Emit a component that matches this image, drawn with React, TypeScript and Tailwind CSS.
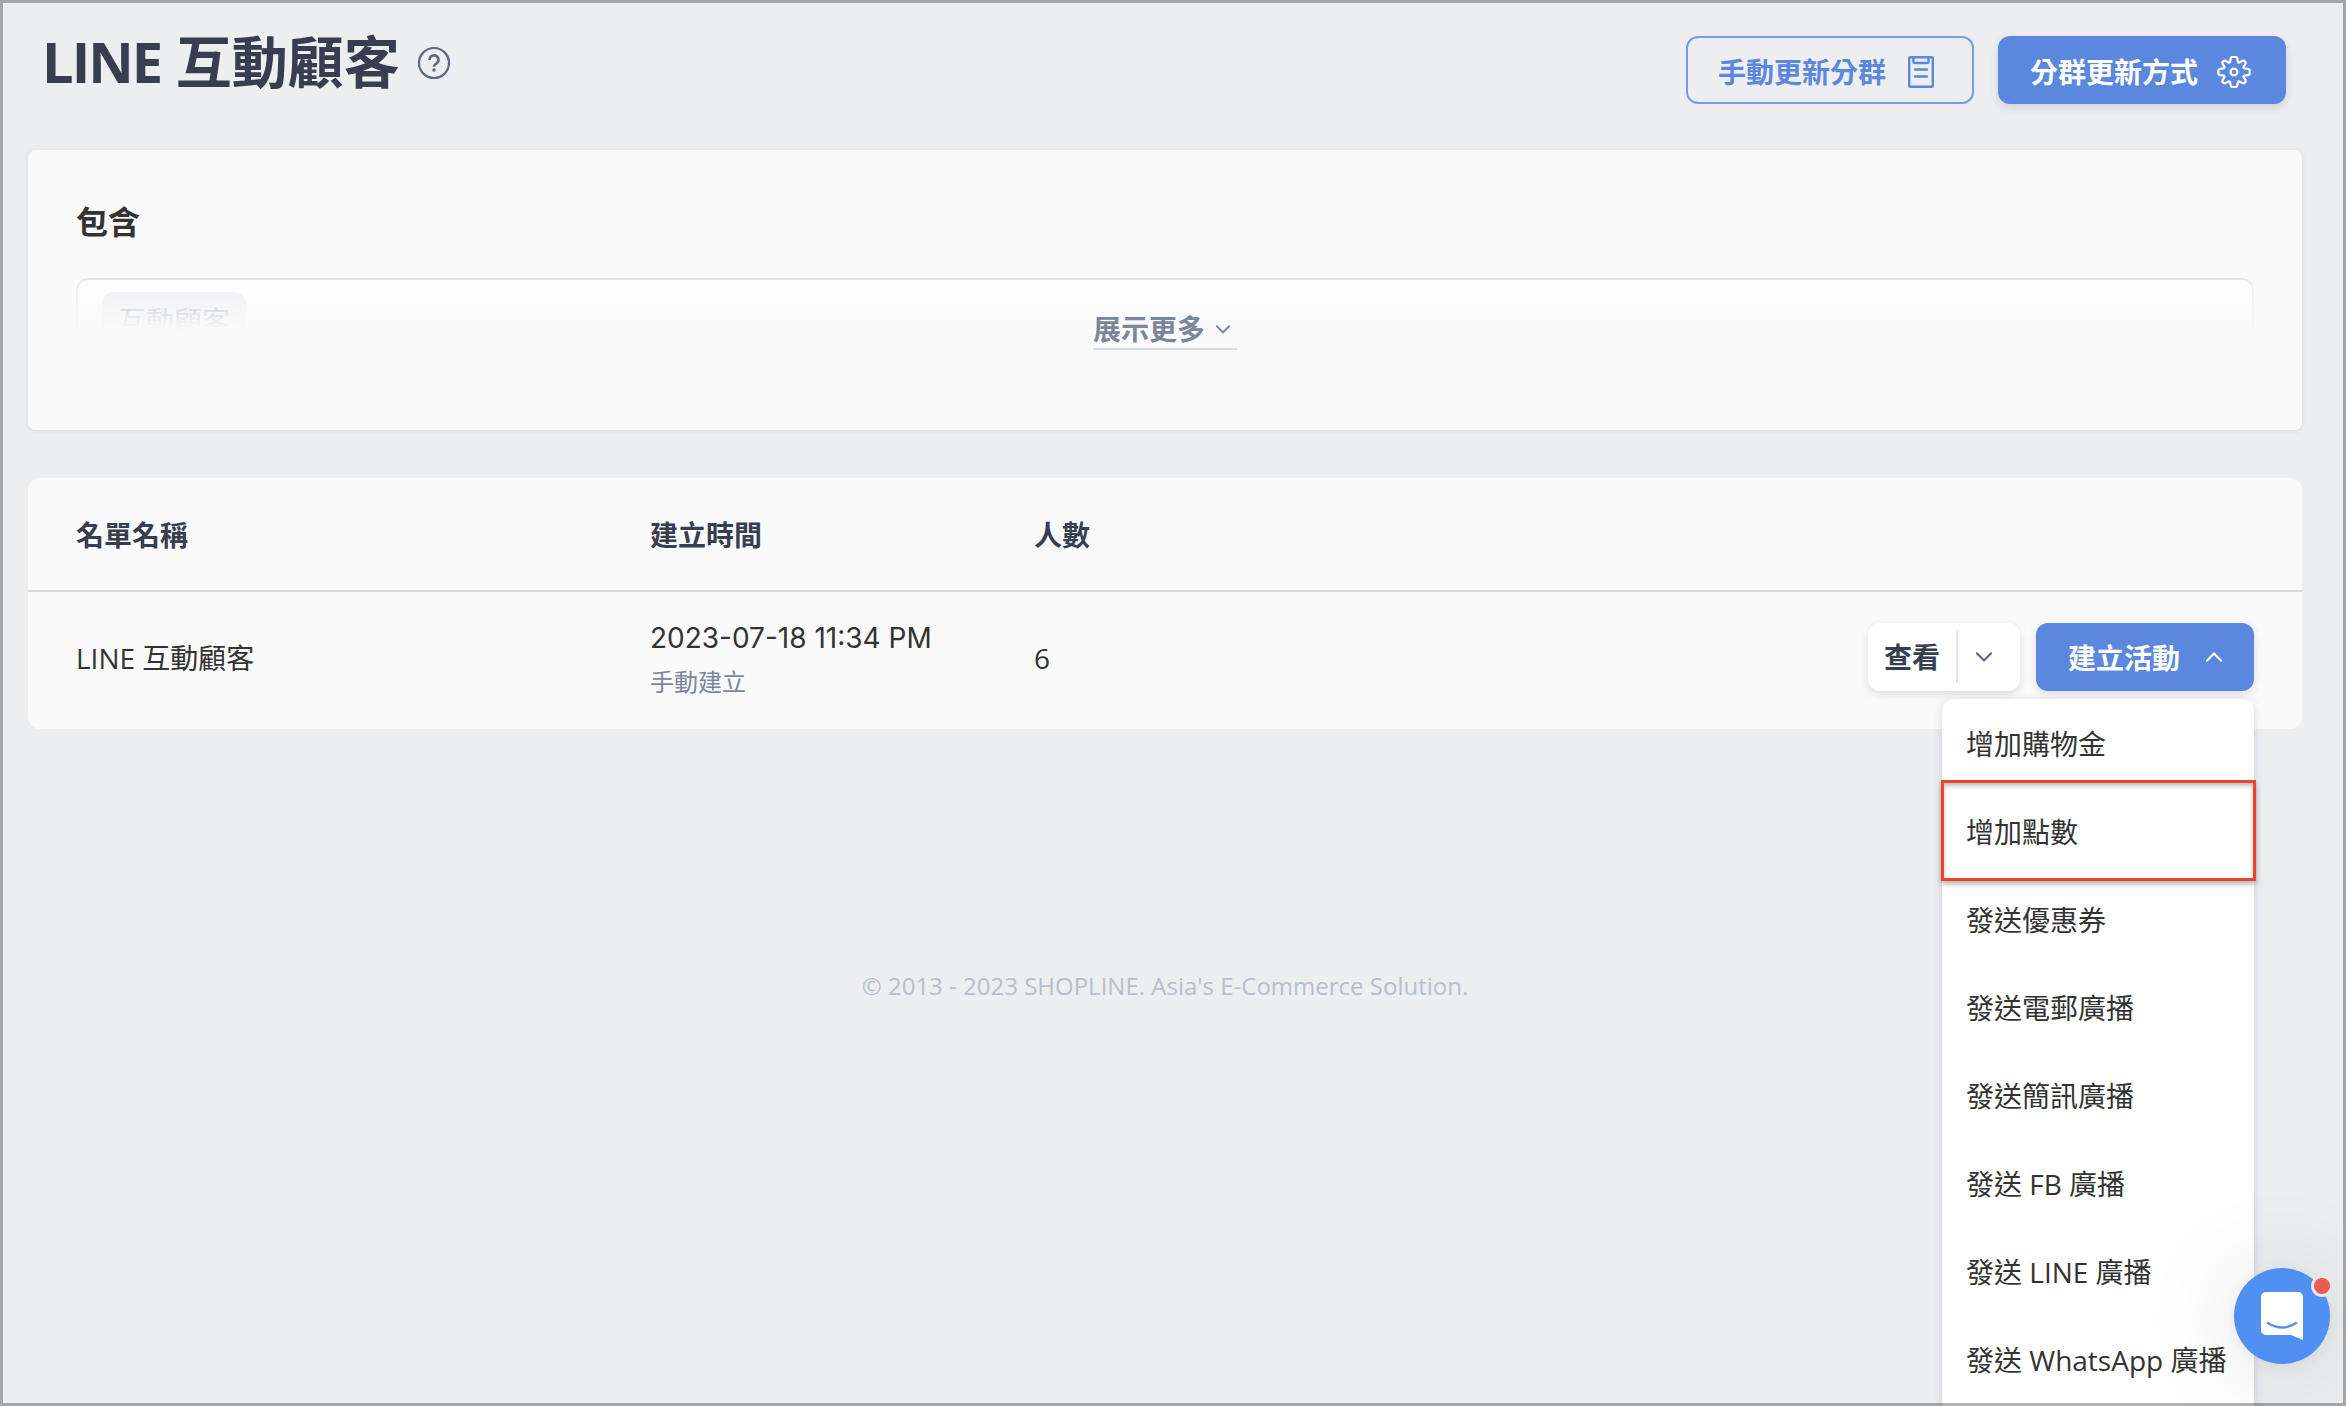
import { useState } from 'react';
import clsx from 'clsx';

const columns = ['名單名稱', '建立時間', '人數'];

const campaignActions = [
  '增加購物金',
  '增加點數',
  '發送優惠券',
  '發送電郵廣播',
  '發送簡訊廣播',
  '發送 FB 廣播',
  '發送 LINE 廣播',
  '發送 WhatsApp 廣播',
];

function HelpIcon() {
  return (
    <svg width="34" height="34" viewBox="0 0 34 34" fill="none" stroke="#5b6785" strokeWidth="2.2" className="mt-1">
      <circle cx="17" cy="17" r="15" />
      <path d="M12.6 14a4.4 4.4 0 1 1 6.6 3.6c-1.5.9-2.2 1.6-2.2 3.2" strokeWidth="2.6" />
      <circle cx="17" cy="24" r="1.7" fill="#5b6785" stroke="none" />
    </svg>
  );
}

function ClipboardIcon() {
  return (
    <svg width="26" height="32" viewBox="0 0 26 32" fill="none" stroke="currentColor" strokeWidth="2.4" strokeLinejoin="round">
      <rect x="1.2" y="1.2" width="23.6" height="29.6" rx="1" />
      <path d="M5.4 1.2v4.4a1.4 1.4 0 0 0 1.4 1.4h12.4a1.4 1.4 0 0 0 1.4-1.4V1.2" />
      <path d="M7 13.5h12M7 20.5h12" strokeLinecap="round" />
    </svg>
  );
}

function GearIcon() {
  return (
    <svg width="34" height="32" viewBox="-17 -16 34 32" fill="none" stroke="currentColor" strokeWidth="2.3" strokeLinejoin="round">
      <path d="M-3.6-11.8C-3.6-16-0.9-15.2 0-15.2S3.6-16 3.6-11.8C3.6-9.2 4.8-8.6 6.6-10.1C9.6-12.4 10.4-11.1 11-10.5S12.6-9.2 10.4-6.4C8.9-4.6 9.6-3.4 12-3.4C16.2-3.4 15.7-0.9 15.7 0S16.2 3.4 12 3.4C9.6 3.4 8.9 4.6 10.4 6.4C12.6 9.2 11.6 9.9 11 10.5S9.6 12.4 6.6 10.1C4.8 8.6 3.6 9.2 3.6 11.8C3.6 16 0.9 15 0 15S-3.6 16-3.6 11.8C-3.6 9.2-4.8 8.6-6.6 10.1C-9.6 12.4-10.4 11.1-11 10.5S-12.6 9.2-10.4 6.4C-8.9 4.6-9.6 3.4-12 3.4C-16.2 3.4-15.7 0.9-15.7 0S-16.2-3.4-12-3.4C-9.6-3.4-8.9-4.6-10.4-6.4C-12.6-9.2-11.6-9.9-11-10.5S-9.6-12.4-6.6-10.1C-4.8-8.6-3.6-9.2-3.6-11.8Z" />
      <circle r="3.4" />
    </svg>
  );
}

function Chevron({ up = false, width = 16 }: { up?: boolean; width?: number }) {
  return (
    <svg width={width} height={width * 0.625} viewBox="0 0 16 10" fill="none" stroke="currentColor" strokeWidth="2.2" className={clsx(up && 'rotate-180')}>
      <path d="M1.1 1.4l6.9 7 6.9-7" strokeLinecap="round" />
    </svg>
  );
}

function ChatLauncher() {
  return (
    <button className="absolute left-[2234px] top-[1268px] w-24 h-24 rounded-full bg-[#5190f3] shadow-[0_2px_12px_rgba(0,0,0,0.06),0_4px_100px_rgba(0,0,0,0.14)]">
      <svg width="96" height="96" viewBox="0 0 96 96" fill="none" className="overflow-visible">
        <path d="M32 24h32a5 5 0 0 1 5 5v43l-12-5H32a5 5 0 0 1-5-5V29a5 5 0 0 1 5-5z" fill="#fff" />
        <path d="M34 55q14 9 28 0" stroke="#5190f3" strokeWidth="2.4" strokeLinecap="round" />
        <circle cx="88" cy="18" r="11" fill="#e6e7e9" />
        <circle cx="88" cy="18" r="8" fill="#ed5a50" />
      </svg>
    </button>
  );
}

export default function App() {
  const [menuOpen, setMenuOpen] = useState(true);

  return (
    <div className="relative w-[2346px] h-[1406px] overflow-hidden bg-[#eceef0] pl-7 pr-11 font-['Open_Sans','Noto_Sans_CJK_TC',sans-serif] text-[28px] leading-10 text-[#333]">
      <header className="flex h-[150px] items-start justify-between px-4 pt-9">
        <div className="-mt-[15px] -ml-0.5 flex items-center gap-[17px]">
          <h1 className="whitespace-nowrap text-[56px] font-bold leading-[80px] text-[#373e50]">
            <span className="tracking-[-2px]">LINE</span> 互動顧客
          </h1>
          <HelpIcon />
        </div>
        <div className="flex gap-6 font-bold">
          <button className="flex h-[68px] w-72 items-center gap-[22px] rounded-xl border-2 border-[#7a9ce6] pl-[30px] pt-1 text-[#5c87de]">
            <span>手動更新分群</span>
            <ClipboardIcon />
          </button>
          <button className="flex h-[68px] w-72 items-center gap-[19px] rounded-xl bg-[#5c87de] pl-8 pt-1 text-white shadow-[0_4px_8px_rgba(40,50,90,0.14)]">
            <span>分群更新方式</span>
            <GearIcon />
          </button>
        </div>
      </header>

      <section className="relative h-[280px] rounded-lg bg-[#fafafa] px-12 pt-[52px] shadow-[0_1px_5px_rgba(30,40,60,0.09)]">
        <h2 className="text-[32px] font-bold leading-10 text-[#333]">包含</h2>
        <div className="mt-9 h-[54px] overflow-hidden rounded-t-xl border-x-2 border-t-2 border-[#dfe5eb] bg-white pl-6 pt-3">
          <span className="inline-flex h-14 items-center rounded-xl bg-[#e7eaf0] px-4 pt-0.5 text-[#7b859c]">互動顧客</span>
        </div>
        <div className="absolute inset-x-0 bottom-0 top-[130px] flex items-start justify-center rounded-b-lg bg-linear-to-b from-[#fafafa]/40 to-[#fafafa] to-[50px] pt-[29px]">
          <button className="flex h-[41px] w-36 items-center gap-[11px] border-b-2 border-[#d3dde6] font-bold text-[#7b859c]">
            <span>展示更多</span>
            <span className="pt-0.5">
              <Chevron width={14} />
            </span>
          </button>
        </div>
      </section>

      <section className="mt-12 h-[251px] rounded-xl bg-[#fafafa]">
        <div className="grid h-[114px] grid-cols-[574px_384px_1fr] items-center border-b-2 border-[#d5dde4] px-12 pt-0.5 font-bold text-[#373e50]">
          {columns.map((label) => (
            <span key={label}>{label}</span>
          ))}
        </div>
        <div className="grid h-[130px] grid-cols-[574px_384px_1fr_auto] items-center px-12">
          <span className="pt-px">LINE 互動顧客</span>
          <div className="pt-[5px]">
            <div className="font-['Inter',sans-serif] leading-10">2023-07-18 11:34 PM</div>
            <div className="mt-1 text-2xl leading-10 text-[#7b859c]">手動建立</div>
          </div>
          <span className="pt-px">6</span>
          <div className="flex gap-4 font-bold">
            <div className="flex h-[68px] w-[152px] items-center rounded-xl bg-white pl-4 text-[#373e50] shadow-[0_3px_8px_rgba(40,50,90,0.14)]">
              <button className="w-[72px] text-left">查看</button>
              <button className="flex h-[52px] grow items-center border-l-2 border-[#e4e7ec] pl-[18px] text-[#5b6785]">
                <Chevron />
              </button>
            </div>
            <button
              onClick={() => setMenuOpen(!menuOpen)}
              className="flex h-[68px] w-[218px] items-center gap-[26px] rounded-xl bg-[#5c87de] pl-8 text-white shadow-[0_3px_8px_rgba(40,50,90,0.14)]"
            >
              <span className="pt-px">建立活動</span>
              <Chevron up={menuOpen} />
            </button>
          </div>
        </div>
      </section>

      <footer className="mt-[237px] text-center text-2xl leading-10 text-[#b7bfcd]">
        © 2013 - 2023 SHOPLINE. Asia's E-Commerce Solution.
      </footer>

      {menuOpen && (
        <ul className="absolute left-[1942px] top-[699px] h-[800px] w-[312px] rounded-xl bg-white shadow-[0_2px_10px_rgba(40,50,90,0.16)]">
          {campaignActions.map((label, idx) => (
            <li key={label} className="relative flex h-[88px] items-center whitespace-nowrap pl-6 pt-0.5">
              {label}
              {idx === 1 && (
                <div className="absolute -left-px -top-[7px] h-[101px] w-[315px] border-[3px] border-[#ec4329] shadow-[0_3px_5px_rgba(0,0,0,0.3),inset_0_3px_4px_rgba(0,0,0,0.25)]" />
              )}
            </li>
          ))}
        </ul>
      )}

      <ChatLauncher />
      <div className="pointer-events-none absolute inset-0 border-[3px] border-black/30" />
    </div>
  );
}
